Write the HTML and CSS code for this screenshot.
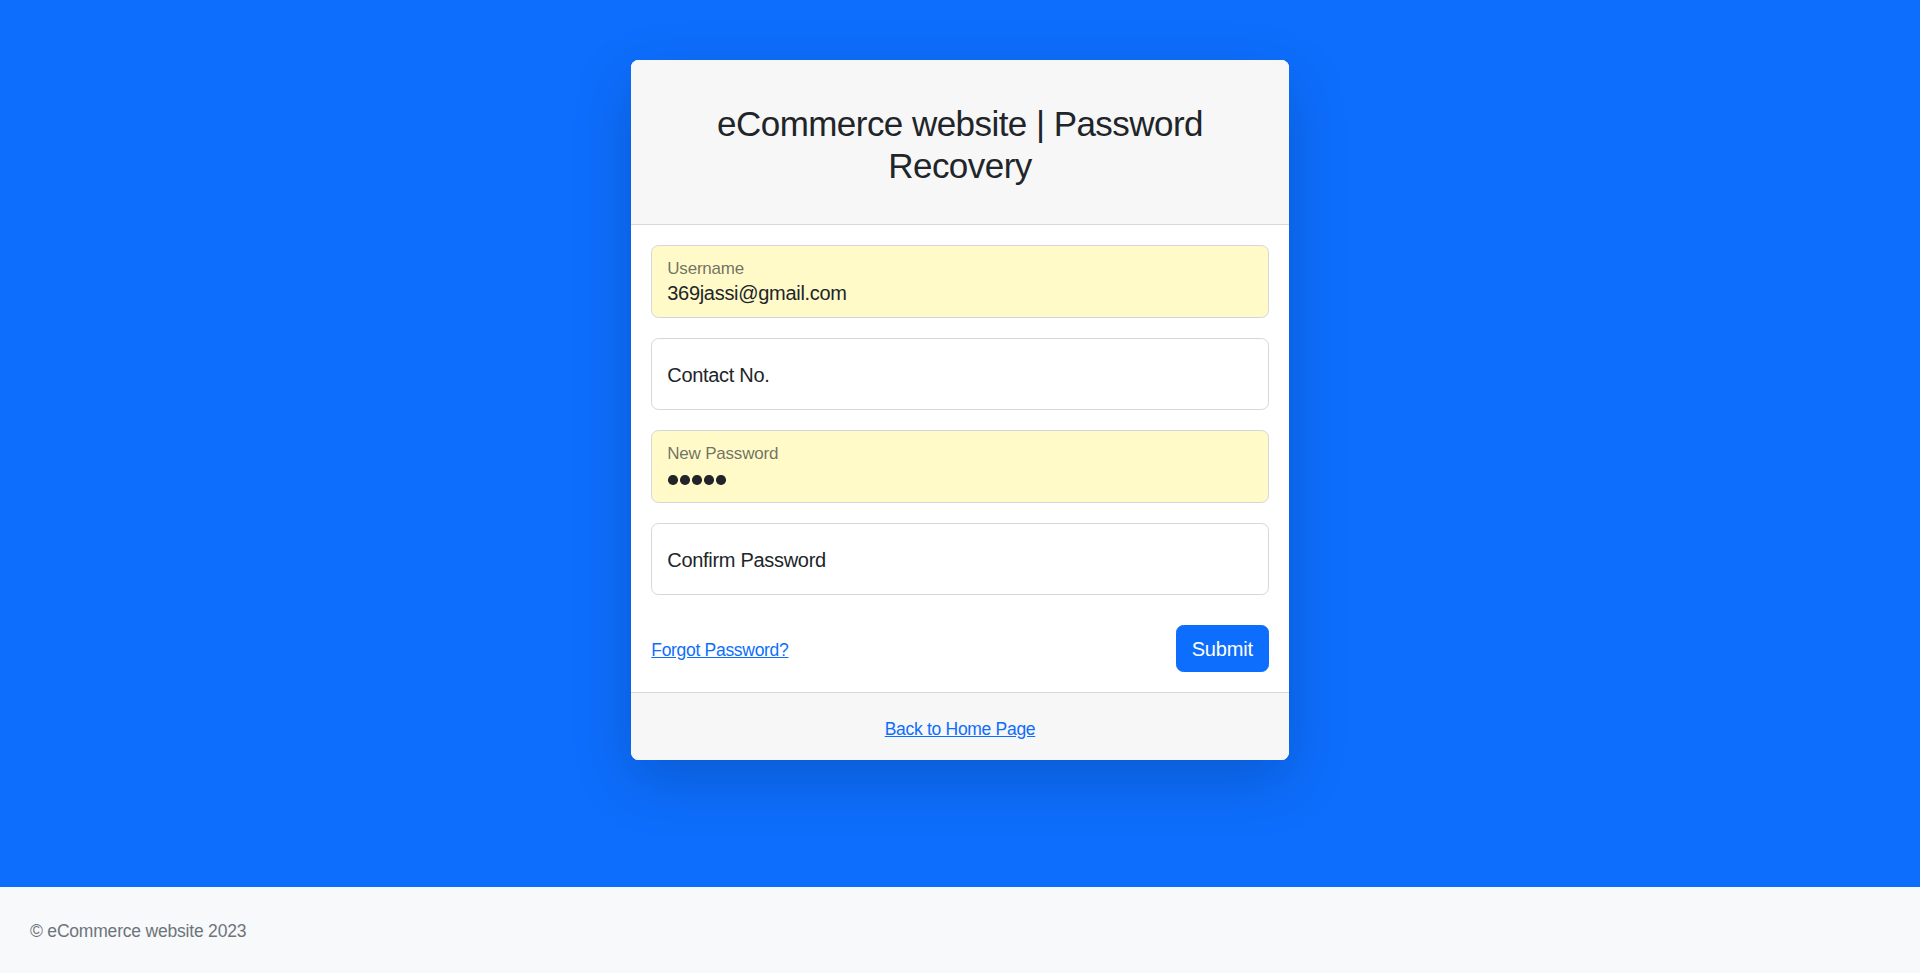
FILE: index.html
```html
<!DOCTYPE html>
<html lang="en">
<head>
<meta charset="utf-8">
<title>Password Recovery - eCommerce website</title>
<link rel="stylesheet" href="styles.css">
</head>
<body class="page">
  <div class="layout">
    <main class="main">
      <div class="card">
        <div class="card-header">
          <h3 class="card-title">eCommerce website | Password Recovery</h3>
        </div>
        <div class="card-body">
          <form class="form">
            <div class="field field-filled">
              <label class="field-label">Username</label>
              <span class="field-value">369jassi@gmail.com</span>
            </div>
            <div class="field field-empty">
              <label class="field-placeholder">Contact No.</label>
            </div>
            <div class="field field-filled">
              <label class="field-label">New Password</label>
              <span class="field-dots"><i class="dot"></i><i class="dot"></i><i class="dot"></i><i class="dot"></i><i class="dot"></i></span>
            </div>
            <div class="field field-empty">
              <label class="field-placeholder">Confirm Password</label>
            </div>
            <div class="form-actions">
              <a class="link-small link-forgot" href="#">Forgot Password?</a>
              <button type="button" class="btn-submit">Submit</button>
            </div>
          </form>
        </div>
        <div class="card-footer">
          <a class="link-small" href="#">Back to Home Page</a>
        </div>
      </div>
    </main>
    <footer class="site-footer">
      <div class="footer-text">&copy; eCommerce website 2023</div>
    </footer>
  </div>
</body>
</html>
```

FILE: styles.css
```css
* {
  box-sizing: border-box;
}

html, body {
  margin: 0;
  padding: 0;
}

.page {
  font-family: "Liberation Sans", Arial, sans-serif;
  font-size: 20px;
  line-height: 1.5;
  color: #212529;
  background: #0d6efd;
}

.layout {
  min-height: 100vh;
  display: flex;
  flex-direction: column;
}

.main {
  flex: 1 0 auto;
  display: flex;
  justify-content: center;
  align-items: flex-start;
  padding-top: 60px;
}

.card {
  width: 657.5px;
  background: #fff;
  border-radius: 7.5px;
  box-shadow: 0 20px 60px rgba(0, 0, 0, 0.175);
  overflow: hidden;
}

.card-header {
  background: #f7f7f7;
  padding: 10px 20px;
  border-bottom: 1px solid rgba(0, 0, 0, 0.125);
}

.card-title {
  margin: 32.5px 0 27.5px;
  font-size: 35px;
  line-height: 42px;
  font-weight: 300;
  text-align: center;
  color: #212529;
  letter-spacing: -0.55px;
}

.card-body {
  padding: 20px;
}

.form {
  display: flex;
  flex-direction: column;
  gap: 20px;
}

.field {
  height: 72.5px;
  border: 1px solid #d3d7dc;
  border-radius: 7.5px;
  padding: 0 15px;
  display: flex;
  flex-direction: column;
  background: #fff;
}

.field-filled {
  background: #fffac8;
  padding-top: 13px;
}

.field-empty {
  justify-content: center;
  padding-top: 2px;
}

.field-label {
  font-size: 17px;
  line-height: 20px;
  color: rgba(33, 37, 41, 0.65);
  letter-spacing: -0.2px;
}

.field-value {
  margin-top: 2px;
  font-size: 20px;
  line-height: 25px;
  color: #212529;
  letter-spacing: -0.3px;
}

.field-placeholder {
  font-size: 20px;
  line-height: 30px;
  color: #212529;
  letter-spacing: -0.3px;
}

.field-dots {
  margin-top: 11px;
  display: flex;
  gap: 2.5px;
  padding-left: 1px;
}

.dot {
  width: 9.5px;
  height: 9.5px;
  border-radius: 50%;
  background: #212529;
}

.form-actions {
  margin-top: 10px;
  display: flex;
  justify-content: space-between;
  align-items: center;
}

.link-small {
  font-size: 17.5px;
  line-height: 26px;
  color: #0d6efd;
  text-decoration: underline;
  letter-spacing: -0.3px;
}

.link-forgot {
  padding-top: 2px;
}

.btn-submit {
  font-family: inherit;
  font-size: 20px;
  line-height: 30px;
  padding: 7.5px 15px;
  color: #fff;
  background: #0d6efd;
  border: 1px solid #0d6efd;
  border-radius: 7.5px;
  cursor: pointer;
  letter-spacing: -0.2px;
}

.card-footer {
  background: #f7f7f7;
  border-top: 1px solid rgba(0, 0, 0, 0.125);
  padding: 21.5px 20px 18.5px;
  text-align: center;
  line-height: 26px;
}

.site-footer {
  background: #f8f9fa;
  padding: 31.5px 30px 28.5px;
  flex-shrink: 0;
}

.footer-text {
  font-size: 17.5px;
  line-height: 26.25px;
  color: #6c757d;
  letter-spacing: -0.2px;
}
```
